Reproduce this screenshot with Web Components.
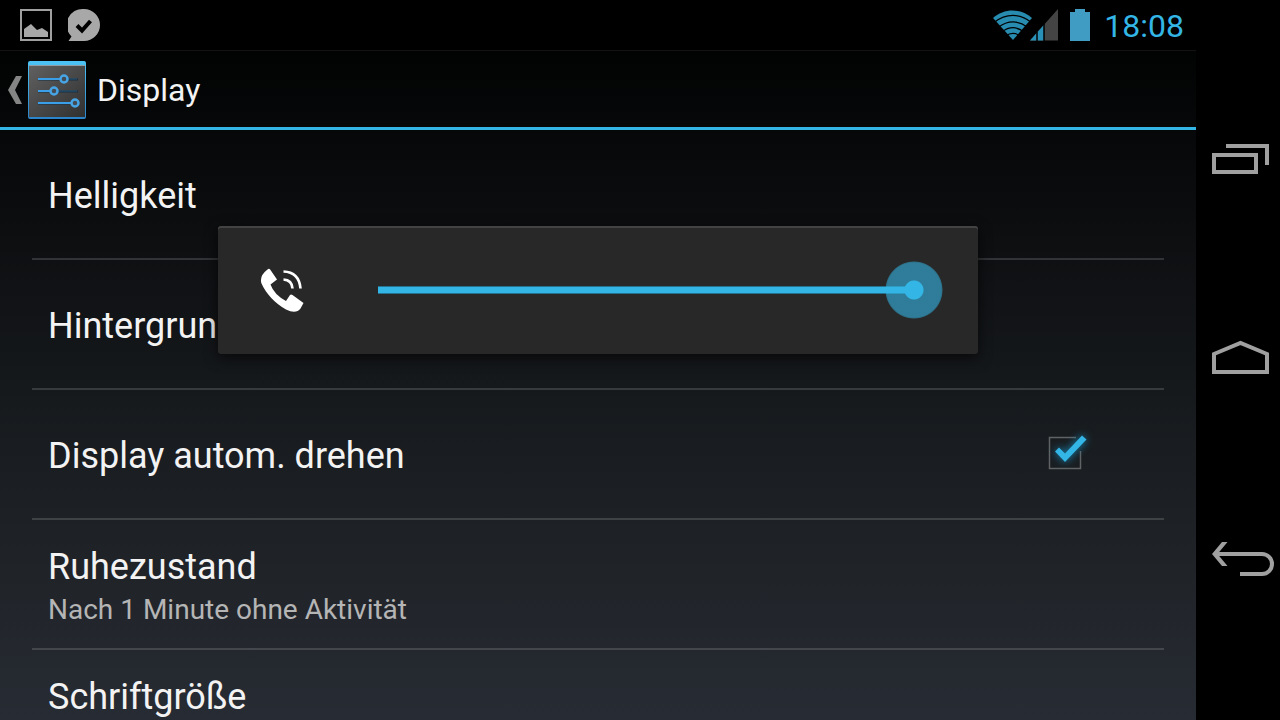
<!DOCTYPE html>
<html lang="de">
<head>
<meta charset="utf-8">
<meta name="viewport" content="width=device-width, initial-scale=1">
<title>Display</title>
<style>
  html, body { margin: 0; height: 100%; overflow: hidden; background: #000; }
  body { font-family: Roboto, "Noto Sans", sans-serif; color: #f3f3f3; }
</style>
</head>
<body>
<device-screen>
  <status-bar slot="status" time="18:08"></status-bar>
  <action-bar slot="header">Display</action-bar>
  <setting-row>Helligkeit</setting-row>
  <setting-row>Hintergrund</setting-row>
  <setting-check>Display autom. drehen</setting-check>
  <setting-row two-line>Ruhezustand<span slot="summary">Nach 1 Minute ohne Aktivität</span></setting-row>
  <setting-row two-line>Schriftgröße</setting-row>
  <volume-panel slot="overlay"></volume-panel>
  <nav-bar slot="nav"></nav-bar>
</device-screen>

<script>
const define = (name, html, setup) => {
  const template = document.createElement('template');
  template.innerHTML = html;
  customElements.define(name, class extends HTMLElement {
    constructor() {
      super();
      this.attachShadow({ mode: 'open' }).append(template.content.cloneNode(true));
    }
    connectedCallback() { if (setup) setup(this); }
  });
};

define('device-screen', `
<style>
  :host { display: grid; grid-template-columns: minmax(0, 1fr) auto; height: 100vh; overflow: hidden; background: #000; }
  .app { position: relative; display: flex; flex-direction: column; min-width: 0; overflow: hidden;
    background: linear-gradient(#000 0, #020303 8%, #0b0c0e 28%, #14171a 50%, #1e2226 74%, #272b33 100%); }
  main { flex: 1; min-height: 0; overflow: hidden; padding: 0 32px; }
</style>
<div class="app">
  <slot name="status"></slot>
  <slot name="header"></slot>
  <main><slot></slot></main>
  <slot name="overlay"></slot>
</div>
<slot name="nav"></slot>`);

define('status-bar', `
<style>
  :host { display: flex; align-items: center; justify-content: space-between; height: 50px; padding: 0 12px 0 20px;
    background: #000; border-bottom: 1px solid #131313; flex: none; box-sizing: content-box; }
  div { display: flex; align-items: center; }
  .notes { gap: 16px; }
  svg { display: block; flex: none; }
  .battery { margin: 0 14px 0 11px; }
  time { color: #33b5e5; font-size: 32px; line-height: 40px; padding-top: 2px; }
</style>
<div class="notes">
  <svg width="32" height="32" viewBox="0 0 32 32" role="img" aria-label="Screenshot"><path d="M1 1h30v30H1z" fill="none" stroke="#a0a0a0" stroke-width="2"/><path d="M4 28v-8l7-5 6 6 5-2 6 4v5z" fill="#a8a8a8"/></svg>
  <svg width="34" height="34" viewBox="1 0 34 34" role="img" aria-label="Nachricht"><path d="M17 1a16 16 0 1 1 0 32H1.500l3-4.500A16 16 0 0 1 17 1z" fill="#a8a8a8"/><path d="M10 17.500l5 5L23.500 13" fill="none" stroke="#000" stroke-width="4"/></svg>
</div>
<div>
  <svg width="66" height="34" viewBox="0 0 66 34" role="img" aria-label="WLAN und Mobilfunk">
    <path d="M0 10C11 0 28 0 39 10L20 32z" fill="#288cb0"/>
    <path d="M1 14.500C13 5 27 5 38.500 14.500M5 19.500C15 12 25 12 35 19.500M9 24C16 18.500 24 18.500 31 24M13 28C17 24.500 23 24.500 27 28" fill="none" stroke="#000" stroke-width="1.200"/>
    <path d="M37 32.500L65 1v31.500z" fill="#444"/>
    <path d="M37 32.500L51 16.750V32.500z" fill="#2991b8"/>
    <path d="M44 24v9M51 16v17" stroke="#000" stroke-width="1.500"/>
  </svg>
  <svg class="battery" width="20" height="32" viewBox="0 0 20 32" role="img" aria-label="Akku"><path d="M0 3h5V0h10v3h5v29H0z" fill="#409cc2"/></svg>
  <time></time>
</div>`, el => { el.shadowRoot.querySelector('time').textContent = el.getAttribute('time'); });

define('action-bar', `
<style>
  :host { display: flex; flex: none; height: 76px; border-bottom: 3px solid #33b5e5; }
  button { display: flex; align-items: center; border: 0; padding: 2px 8px 0; background: none; color: inherit; font: inherit; }
  svg { display: block; flex: none; }
  .app-icon { margin: 0 11px 0 6px; }
  h1 { margin: 0; font-size: 32px; line-height: 40px; font-weight: 400; }
</style>
<button type="button">
  <svg width="14" height="28" viewBox="0 0 14 28" aria-hidden="true"><path d="M8 0h6L7 14l7 14H8L0 14z" fill="#858585"/></svg>
  <svg class="app-icon" width="58" height="58" viewBox="0 0 58 58" aria-hidden="true">
    <defs><linearGradient id="g" x2="1" y2="1"><stop stop-color="#606060"/><stop offset="1" stop-color="#303030"/></linearGradient>
    <linearGradient id="b" x2="0" y2="1"><stop stop-color="#4cc3f5"/><stop offset="1" stop-color="#2b83c9"/></linearGradient></defs>
    <rect width="58" height="58" rx="2" fill="url(#b)"/>
    <path d="M1 5h56v51H1z" fill="url(#g)"/><path d="M1 4.500h56" stroke="#8f9da5"/>
    <path d="M10 18.500h40M10 30.500h40M10 42.500h40" stroke="#172e42" stroke-width="2"/>
    <path d="M10 18h22M10 30h12M10 42h33" stroke="#3b9ee8" stroke-width="2"/>
    <path d="M39 18h10M29 30h20" stroke="#285779" stroke-width="1"/>
    <g fill="#444b52" stroke="#47a4e5" stroke-width="2.500"><circle cx="36" cy="18" r="3.500"/><circle cx="26" cy="30" r="3.500"/><circle cx="47" cy="42" r="3.500"/></g>
  </svg>
  <h1><slot></slot></h1>
</button>`);

const rowStyle = `
  :host { display: block; border-bottom: 2px solid rgba(255, 255, 255, .15); }
  .row { display: flex; align-items: center; box-sizing: border-box; width: 100%; height: 128px; margin: 0; border: 0;
    padding: 4px 16px 0; background: none; color: inherit; font: inherit; text-align: left; white-space: nowrap; }
  .title { display: block; font-size: 36px; line-height: 44px; }`;

define('setting-row', `
<style>${rowStyle}
  .summary { display: none; color: #b5b5b5; font-size: 28px; line-height: 38px; margin-top: 2px; min-height: 38px; }
  :host([two-line]) .row { padding-top: 6px; }
  :host([two-line]) .summary { display: block; }
</style>
<button class="row" type="button"><span><span class="title"><slot></slot></span><span class="summary"><slot name="summary"></slot></span></span></button>`);

define('setting-check', `
<style>${rowStyle}
  .row { justify-content: space-between; padding-right: 68px; }
  .box { display: grid; width: 56px; height: 56px; }
  input, svg { grid-area: 1 / 1; width: 56px; height: 56px; margin: 0; }
  input { appearance: none; }
  svg { pointer-events: none; }
  .tick { filter: drop-shadow(0 0 4px #168abb); }
  input:not(:checked) + svg .tick { display: none; }
</style>
<label class="row"><span class="title"><slot></slot></span>
  <span class="box"><input type="checkbox" checked>
  <svg viewBox="0 1 56 56" aria-hidden="true">
    <path d="M36 10.500H9.500v31h31V24" fill="none" stroke="#606264" stroke-width="1.500"/>
    <path class="tick" d="M15 24.500l4-4 6 6L42 8.500l4.500 4L25 35z" fill="#33b5e5"/>
  </svg></span>
</label>`);

define('volume-panel', `
<style>
  :host { position: absolute; top: 226px; left: 0; right: 0; margin: 0 auto; width: calc(100% - 64px); max-width: 760px; height: 128px;
    box-sizing: border-box; display: flex; align-items: center; gap: 72px; padding: 0 35px 0 40px;
    background: #282828; border-radius: 3px; box-shadow: inset 0 2px #434343, 0 4px 14px rgba(0, 0, 0, .65); }
  svg { flex: none; display: block; }
  input { appearance: none; flex: 1; min-width: 0; height: 58px; margin: 0;
    background: linear-gradient(#25738f 0 1px, #33b5e5 1px 7px, #25738f 7px) left center / calc(100% - 28px) 8px no-repeat; }
  input::-webkit-slider-thumb { appearance: none; width: 58px; height: 58px; border: 0; border-radius: 50%;
    background: radial-gradient(circle, #33b5e5 9px, rgba(51, 181, 229, .6) 10px 27px, rgba(51, 181, 229, .5) 28px, transparent 29px); }
</style>
<svg width="48" height="48" viewBox="0 1 48 48" aria-hidden="true">
  <path d="M9.500 4.500Q11 3 12.500 5L19 14.500L12.500 19.500Q16 29.500 28 36L32 30Q33 29 34.500 30L45.500 38L42.500 43.500Q38 49.500 28 44.500C17 38.500 8 28.500 3.500 18.500Q1 11 9.500 4.500z" fill="#fff"/>
  <path d="M25.500 14.500Q34 15 34.500 23.500M25.500 6.500Q41 7 42.500 23.500" fill="none" stroke="#fff" stroke-width="2.700"/>
</svg>
<input type="range" min="0" max="7" value="7" aria-label="Lautstärke">`);

define('nav-bar', `
<style>
  :host { display: block; background: #000; }
  nav { display: flex; flex-direction: column; height: 100%; box-sizing: border-box; padding: 60px 0; }
  button { flex: 1; display: grid; place-items: center; border: 0; padding: 0; background: none; color: #a0a0a0; }
  svg { display: block; }
</style>
<nav>
  <button type="button" aria-label="Letzte Apps"><svg width="84" height="60" viewBox="6 0 84 60"><path d="M24 25h42v17H24zM36 16h41v19" fill="none" stroke="currentColor" stroke-width="4"/></svg></button>
  <button type="button" aria-label="Startseite"><svg width="84" height="60" viewBox="6 0 84 60"><path d="M24 42V24l26.500-11L77 24v18z" fill="none" stroke="currentColor" stroke-width="4"/></svg></button>
  <button type="button" aria-label="Zurück"><svg width="84" height="60" viewBox="6 0 84 60"><path d="M25 24h47a10 10 0 0 1 0 20H50" fill="none" stroke="currentColor" stroke-width="4"/><path d="M22 24l10-12h5.500l-10 12 10 12H32z" fill="currentColor"/></svg></button>
</nav>`);
</script>
</body>
</html>
